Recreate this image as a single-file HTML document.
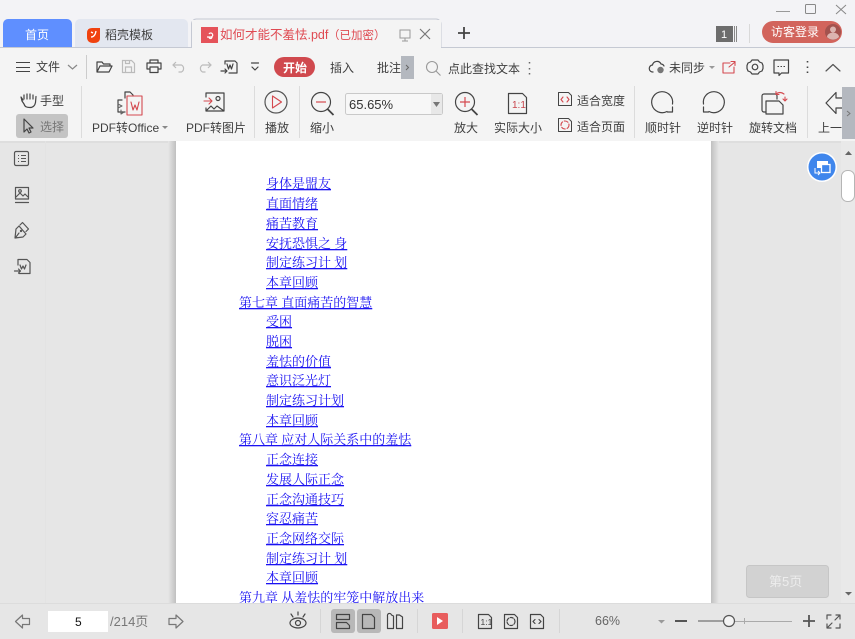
<!DOCTYPE html>
<html lang="zh"><head><meta charset="utf-8"><style>
html,body{margin:0;padding:0;width:855px;height:639px;overflow:hidden;background:#e6e6e6}
svg{position:absolute;left:0;top:0;display:block}
text{font-family:"Liberation Sans","Noto Sans CJK SC",sans-serif;font-size:12px;fill:#3f3f3f}
.i{fill:none;stroke:#444;stroke-width:1.2;stroke-linejoin:round;stroke-linecap:round}
.l{fill:none;stroke:#bbb;stroke-width:1.2}
.r{fill:none;stroke:#d4494f;stroke-width:1.1;stroke-linejoin:round;stroke-linecap:round}
.d{stroke:#dcdcdc;stroke-width:1}
.dd{stroke:#d6d6d6;stroke-width:1}
.a text{font-family:"Liberation Serif","Noto Serif CJK SC",serif;font-size:13px;fill:#1a12f2;text-decoration:underline}
</style></head><body>
<svg width="855" height="639" viewBox="0 0 855 639">
<defs><linearGradient id="s" x1="0" x2="1"><stop offset="0" stop-color="#e6e6e6"/><stop offset="1" stop-color="#c0c0c0"/></linearGradient>
<linearGradient id="s2" x1="0" x2="1"><stop offset="0" stop-color="#c0c0c0"/><stop offset="1" stop-color="#e6e6e6"/></linearGradient></defs>
<!-- title bar -->
<rect width="855" height="47" fill="#f3f3f6"/>
<path d="M3 47V24a5 5 0 0 1 5-5h59a5 5 0 0 1 5 5v23z" fill="#5f8fff"/>
<text x="25" y="39" style="fill:#fff">首页</text>
<path d="M75 47V24a5 5 0 0 1 5-5h103a5 5 0 0 1 5 5v23z" fill="#e3e7f0"/>
<path d="M87 33q0-5 5-5h8v10q0 5-6.500 5t-6.500-6z" fill="#f0420f"/>
<path d="M91 37q4 0 5-6M93 33l-2-1" stroke="#fff" stroke-width="1.300" fill="none"/>
<text x="105" y="39">稻壳模板</text>
<rect x="0" y="47" width="855" height="94" fill="#f4f4f4"/>
<path d="M0 47.500H191.500V24a5 5 0 0 1 5-5H436a5 5 0 0 1 5 5V47.500H855" fill="none" stroke="#c5c9d3"/>
<rect x="192" y="20" width="249" height="28" fill="#f4f4f4"/>
<rect x="201" y="27" width="17" height="16" fill="#e5535a"/>
<path d="M207 37h4a2 2 0 1 0-2-3M212 37a1.500 1.500 0 1 1-3 0" stroke="#fff" stroke-width="1.200" fill="none"/>
<text x="220" y="39" style="fill:#df4a52;font-size:12.500px">如何才能不羞怯.pdf</text>
<text x="328" y="39" style="fill:#df4a52;font-size:11.500px">（已加密）</text>
<path d="M400 30h10v8h-10zM405 38v3M402 41h6" fill="none" stroke="#999"/>
<path d="M420 29l10 10M430 29l-10 10" stroke="#777" stroke-width="1.200"/>
<path d="M464 27v12M458 33h12" stroke="#444" stroke-width="1.800"/>
<rect x="716" y="26" width="17" height="16" fill="#6d6d6d"/><text x="721" y="38" style="fill:#fff;font-size:11px">1</text>
<path d="M734.500 26v16M736.500 26v16" stroke="#888"/>
<path d="M749.500 24v19" stroke="#d9d9d9"/>
<rect x="762" y="21" width="80" height="22" rx="11" fill="#d2645c"/>
<text x="771" y="36" style="fill:#fff">访客登录</text>
<circle cx="833" cy="32" r="8" fill="#a3524e"/><circle cx="833" cy="29.500" r="3" fill="#dcb4b0"/><path d="M827 37a6 4.500 0 0 1 12 0a8 8 0 0 1-12 0z" fill="#dcb4b0"/>
<path d="M776 11.500h14" stroke="#999"/>
<rect x="805.500" y="4.500" width="10" height="9" rx="1" fill="none" stroke="#888"/>
<path d="M836 5l10 9M846 5l-10 9" stroke="#888"/>
<!-- row 2 -->
<path d="M16 62.500h14M16 67.500h14M16 71.500h14" stroke="#444" stroke-width="1.100"/>
<text x="36" y="71">文件</text>
<path d="M68 65l4.500 4 4.500-4" class="l" style="stroke:#888"/>
<path d="M86.500 55v24" stroke="#ccc"/>
<path class="i" d="M97 72V62h5l1.500 2h6.500v2M97 72l3-6h12l-3 6z"/>
<path class="l" d="M122.500 60.500h9l3 3v9h-12zM125.500 72v-5h6v5M125.500 60.500v3h4v-3"/>
<path class="i" d="M150 63v-3h8v3M150 69h-3v-6h14v6h-3M150 67h8v5.500h-8z"/>
<path class="l" d="M176 62l-3 3 3 3M173.500 65h8a4 4 0 0 1 0 7h-3"/>
<path class="l" d="M208 62l3 3-3 3M210.500 65h-8a4 4 0 0 0 0 7h3"/>
<path class="i" d="M225 64v-3h10l2 2v10h-8M227 64l1.500 5 1.500-4 1.500 4 1.500-5M221 71h6M225 69l2 2-2 2"/>
<path class="i" d="M251.500 63h7M252 67l3 3 3-3"/>
<rect x="274" y="57" width="41" height="20" rx="10" fill="#d0494e"/>
<text x="283" y="72" style="fill:#fff;font-weight:bold">开始</text>
<text x="330" y="72">插入</text>
<text x="377" y="72">批注</text>
<rect x="401" y="56" width="13" height="23" fill="#b4b8bf"/>
<path d="M406 65l2.500 2.500-2.500 2.500" fill="none" stroke="#666"/>
<circle cx="432" cy="67" r="5.500" fill="none" stroke="#999" stroke-width="1.100"/><path d="M436 71l4.500 4.500" stroke="#999" stroke-width="1.100"/>
<text x="448" y="73">点此查找文本</text>
<path d="M529.500 62v1.500M529.500 68v1.500M529.500 73v1.500" stroke="#666" stroke-width="1.500"/>
<path class="i" d="M653 72a3.500 3.500 0 0 1-.5-7 4.500 4.500 0 0 1 8.500-1 3.500 3.500 0 0 1 3 2"/>
<circle cx="660.500" cy="70" r="3.200" fill="#777"/>
<text x="669" y="72">未同步</text>
<path d="M709 66h6l-3 3z" fill="#999"/>
<path class="r" d="M730 63h-7v10h11v-6M729 67l6-5M731 61.500h4v4"/>
<circle cx="755" cy="67" r="2.800" fill="none" stroke="#444" stroke-width="1.200"/>
<path class="i" d="M752 60h6l1.500 2 2.500 1 1 2.500v3l-1 2.500-2.500 1-1.500 2h-6l-1.500-2-2.500-1-1-2.500v-3l1-2.500 2.500-1z"/>
<path class="i" d="M774 60h14.500v13h-7l-2.500 2.500v-2.500h-5z"/>
<path d="M777.500 66.500h1.500M780.500 66.500h1.500M783.500 66.500h1.500" stroke="#444"/>
<path d="M807.500 61v1.500M807.500 66.500v1.500M807.500 71.500v1.500" stroke="#444" stroke-width="1.600"/>
<path class="i" d="M826 71l7-6.500 7 6.500" style="stroke:#555"/>
<!-- row 3 -->
<path class="i" d="M23 100l-2-3 1 4 2 3c1 3 3 3.500 6 3.500 3 0 5-2 5.500-5l.5-6M24 99v-4M27 99v-5M30 99v-5M33 99v-4"/>
<text x="40" y="105">手型</text>
<rect x="16" y="114" width="52" height="24" rx="3" fill="#c4c4c4"/>
<path class="i" d="M24 119l0 13 3-3 2 4 2-1-2-4h4z"/>
<text x="40" y="131" style="fill:#777">选择</text>
<path class="d" d="M81.500 86v52M254.500 86v52M299.500 86v52M634.500 86v52M807.500 86v52"/>
<path class="i" d="M128 92h-2l-1 0v6M127 92h3l3 3v1M122 100h-4v12h7M120 112l2 0"/>
<path class="r" d="M127 96h15v19h-15zM131 102l2 8 2-5 2 5 2-8"/>
<path class="r" style="stroke:#666" d="M118 104l4 2-4 2M124 112l-3 2 0-4"/>
<text x="92" y="132">PDF转Office</text>
<path d="M162 126h6l-3 3z" fill="#888"/>
<path class="i" d="M206 97v-4h18v18h-18v-3M206 111l5-5 3 3 3-3 7 5"/>
<circle cx="218" cy="98.500" r="2" class="i"/>
<path class="r" d="M204 101h8M209 98l3 3-3 3"/>
<text x="186" y="132">PDF转图片</text>
<circle cx="276" cy="102" r="11" class="i" style="stroke:#555"/>
<path class="r" d="M272.500 96v12l9-6z"/>
<text x="265" y="132">播放</text>
<circle cx="321" cy="102" r="9.500" class="i"/><path d="M327.500 109l6 6" stroke="#444" stroke-width="1.800"/><path d="M316 102h10" stroke="#d4494f" stroke-width="1.200"/>
<text x="310" y="132">缩小</text>
<rect x="345.500" y="93.500" width="97" height="21" rx="2" fill="#f7f7f7" stroke="#c9c9c9"/>
<rect x="431" y="94" width="11" height="20" fill="#e8e8e8"/>
<path d="M433 102h7l-3.500 5z" fill="#777"/>
<text x="349" y="109" style="font-size:13px;fill:#333">65.65%</text>
<circle cx="465" cy="102" r="9.500" class="i"/><path d="M471.500 109l6 6" stroke="#444" stroke-width="1.800"/><path d="M460 102h10M465 97v10" stroke="#d4494f" stroke-width="1.200"/>
<text x="454" y="132">放大</text>
<path class="i" d="M508.500 93.500h14l4 4v16h-18z"/>
<text x="512" y="108" style="font-size:10px;fill:#c8454c">1:1</text>
<text x="494" y="132">实际大小</text>
<path class="i" d="M558.500 92.500h10l3 3v10h-13z" style="stroke-width:1"/><path class="r" d="M563 97l-2 2.500 2 2.500M567 97l2 2.500-2 2.500"/>
<text x="577" y="105">适合宽度</text>
<path class="i" d="M558.500 118.500h10l3 3v10h-13z" style="stroke-width:1"/><circle cx="565" cy="125" r="4" class="r" stroke-dasharray="4 2"/>
<text x="577" y="131">适合页面</text>
<path class="i" d="M667 111.500A10.500 10.500 0 1 1 672.500 104M672.500 107v5h-5"/>
<text x="645" y="132">顺时针</text>
<path class="i" d="M709 111.500A10.500 10.500 0 1 0 703.500 104M703.500 107v5h5"/>
<text x="697" y="132">逆时针</text>
<path class="i" d="M766 112h-2a2 2 0 0 1-2-2V96a2 2 0 0 1 2-2h11a2 2 0 0 1 2 2v3"/>
<path class="i" d="M766 114V101h13l4 4v9z"/>
<path class="r" d="M776 94q4-3 8 0M776 91.500v3h3M785 97v4M783 99l2 2 2-2"/>
<text x="749" y="132">旋转文档</text>
<path class="i" d="M842 98h-6v-5.500L826 103l10 10.500V108h6"/>
<text x="818" y="132">上一</text>
<rect x="842" y="87" width="13" height="52" fill="#b4b8bf"/>
<path d="M847 111l3 2.500-3 2.500" fill="none" stroke="#777"/>
<!-- content -->
<rect x="0" y="141" width="855" height="462" fill="#e6e6e6"/>
<rect x="0" y="141" width="855" height="2" fill="#dedede"/>
<rect x="168" y="141" width="8" height="462" fill="url(#s)"/>
<rect x="711" y="141" width="8" height="462" fill="url(#s2)"/>
<rect x="176" y="141" width="535" height="462" fill="#fff"/>
<path d="M45.500 141v462" stroke="#e3e3e3"/>
<rect x="14.500" y="151.500" width="14" height="14" rx="1.500" class="i" style="stroke:#555"/>
<path d="M18 155.500h1M18 158.500h1M18 161.500h1M21 155.500h5M21 158.500h5M21 161.500h5" stroke="#555"/>
<path class="i" style="stroke:#555" d="M15.500 199v-11.500h13V199zM15.500 202.500h13M16 197l4-4 3 3 2-2 3 3"/><circle cx="20" cy="191" r="1.300" class="i" style="stroke:#555"/>
<path class="i" style="stroke:#555" d="M19 226l-3 3-1 9 8-1 3-3zM20 225l2.500-2.500 6 6.500-2.500 2.500M19 233l-3 4"/><circle cx="21" cy="231" r="1.200" fill="#555"/>
<path class="i" style="stroke:#555" d="M18 265v-5.500h9l3 3v11H19M20 265l1.500 4 1.500-3 1.500 3 1.500-4M14.500 271h6M18.500 269l2 2-2 2"/>
<rect x="841" y="141" width="14" height="462" fill="#e9e9e9"/>
<path d="M845 155l3.500-4 3.500 4z" fill="#666"/>
<rect x="841.500" y="170.500" width="13" height="31" rx="6" fill="#fff" stroke="#b5b5b5"/>
<path d="M845 592h7l-3.500 3.500z" fill="#666"/>
<circle cx="822" cy="167" r="15" fill="#fff"/><circle cx="822" cy="167" r="13.500" fill="#3f86ec"/>
<rect x="817" y="161" width="11" height="7" fill="#fff"/><rect x="821.500" y="164.500" width="8.500" height="8" fill="#3f86ec" stroke="#fff" stroke-width="1.300"/>
<path d="M815 168v5h4M818 171l2 2-2 2" fill="none" stroke="#fff"/>
<rect x="746.500" y="565.500" width="82" height="32" rx="3" fill="#d2d2d2" stroke="#c6c6c6"/>
<text x="769" y="586" style="fill:#ececec;font-size:13px">第5页</text>
<g class="a">
<text x="266" y="188">身体是盟友</text>
<text x="266" y="208">直面情绪</text>
<text x="266" y="228">痛苦教育</text>
<text x="266" y="248">安抚恐惧之 身</text>
<text x="266" y="267">制定练习计 划</text>
<text x="266" y="287">本章回顾</text>
<text x="239" y="307">第七章 直面痛苦的智慧</text>
<text x="266" y="326">受困</text>
<text x="266" y="346">脱困</text>
<text x="266" y="366">羞怯的价值</text>
<text x="266" y="385">意识泛光灯</text>
<text x="266" y="405">制定练习计划</text>
<text x="266" y="425">本章回顾</text>
<text x="239" y="444">第八章 应对人际关系中的羞怯</text>
<text x="266" y="464">正念连接</text>
<text x="266" y="484">发展人际正念</text>
<text x="266" y="504">正念沟通技巧</text>
<text x="266" y="523">容忍痛苦</text>
<text x="266" y="543">正念网络交际</text>
<text x="266" y="563">制定练习计 划</text>
<text x="266" y="582">本章回顾</text>
<text x="239" y="602">第九章 从羞怯的牢笼中解放出来</text>
</g>
<!-- bottom bar -->
<rect x="0" y="603" width="855" height="36" fill="#e6e6e6"/>
<path d="M0 603.500h855" stroke="#dcdcdc"/>
<path class="i" style="stroke:#777" d="M15.500 621.500l7-6.500v3.500h7v6h-7v3.500z"/>
<rect x="48" y="611" width="60" height="21" fill="#fff"/>
<text x="75" y="626" style="fill:#111">5</text>
<text x="110" y="626" style="fill:#777;font-size:13px">/214页</text>
<path class="i" style="stroke:#777" d="M183 621.500l-7-6.500v3.500h-7v6h7v3.500z"/>
<ellipse cx="298" cy="623" rx="8" ry="5" class="i"/><circle cx="298" cy="623" r="2.500" class="i"/>
<path class="i" d="M291 614l2 3M298 612v3M305 614l-2 3"/>
<path class="dd" d="M320.500 609v24M417.500 609v24M462.500 609v24M559.500 609v24"/>
<rect x="331" y="609" width="24" height="24" rx="3" fill="#b8b8b8"/>
<rect x="357" y="609" width="24" height="24" rx="3" fill="#b8b8b8"/>
<path class="i" d="M336.500 614.500h13v5h-13zM336.500 622.500h10l3 3v3h-13z"/>
<path class="i" d="M362.500 614.500h9l3 3v11h-12z"/>
<path class="i" d="M387.500 616a2 2 0 0 1 4 -1l2 1v12.500h-6zM396.500 615h3l3 2v11.500h-6z"/>
<rect x="432" y="613" width="16" height="16" rx="1.500" fill="#e85d5d"/>
<path d="M437 617v8l6-4z" fill="#fff"/>
<path class="i" d="M478.500 614.500h10l3 3v11h-13z"/><text x="480.500" y="625" style="font-size:8.500px;fill:#444">1:1</text>
<path class="i" d="M504.500 614.500h10l3 3v11h-13z"/><circle cx="511" cy="621.500" r="4" class="i" stroke-dasharray="3 1.500"/>
<path class="i" d="M530.500 614.500h10l3 3v11h-13z"/><path class="i" d="M535 619.500l-2 2 2 2M539 619.500l2 2-2 2"/>
<text x="595" y="625" style="fill:#666;font-size:12.500px">66%</text>
<path d="M658 620h7l-3.500 3.500z" fill="#999"/>
<path d="M675 621h12" stroke="#555" stroke-width="2"/>
<path d="M698 621h31" stroke="#555" stroke-width="1"/>
<path d="M729 621.500h63M744.500 618v6" stroke="#aaa"/>
<circle cx="729" cy="621" r="5.500" fill="#f4f4f4" stroke="#555" stroke-width="1.200"/>
<path d="M803 621h12M809 615v12" stroke="#555" stroke-width="1.800"/>
<path class="i" d="M827 619v-4h4M836 615h4v4M840 624v4h-4M831 628h-4v-4M828 627l4-4M839 616l-4 4" style="stroke:#555"/>
</svg>
</body></html>
